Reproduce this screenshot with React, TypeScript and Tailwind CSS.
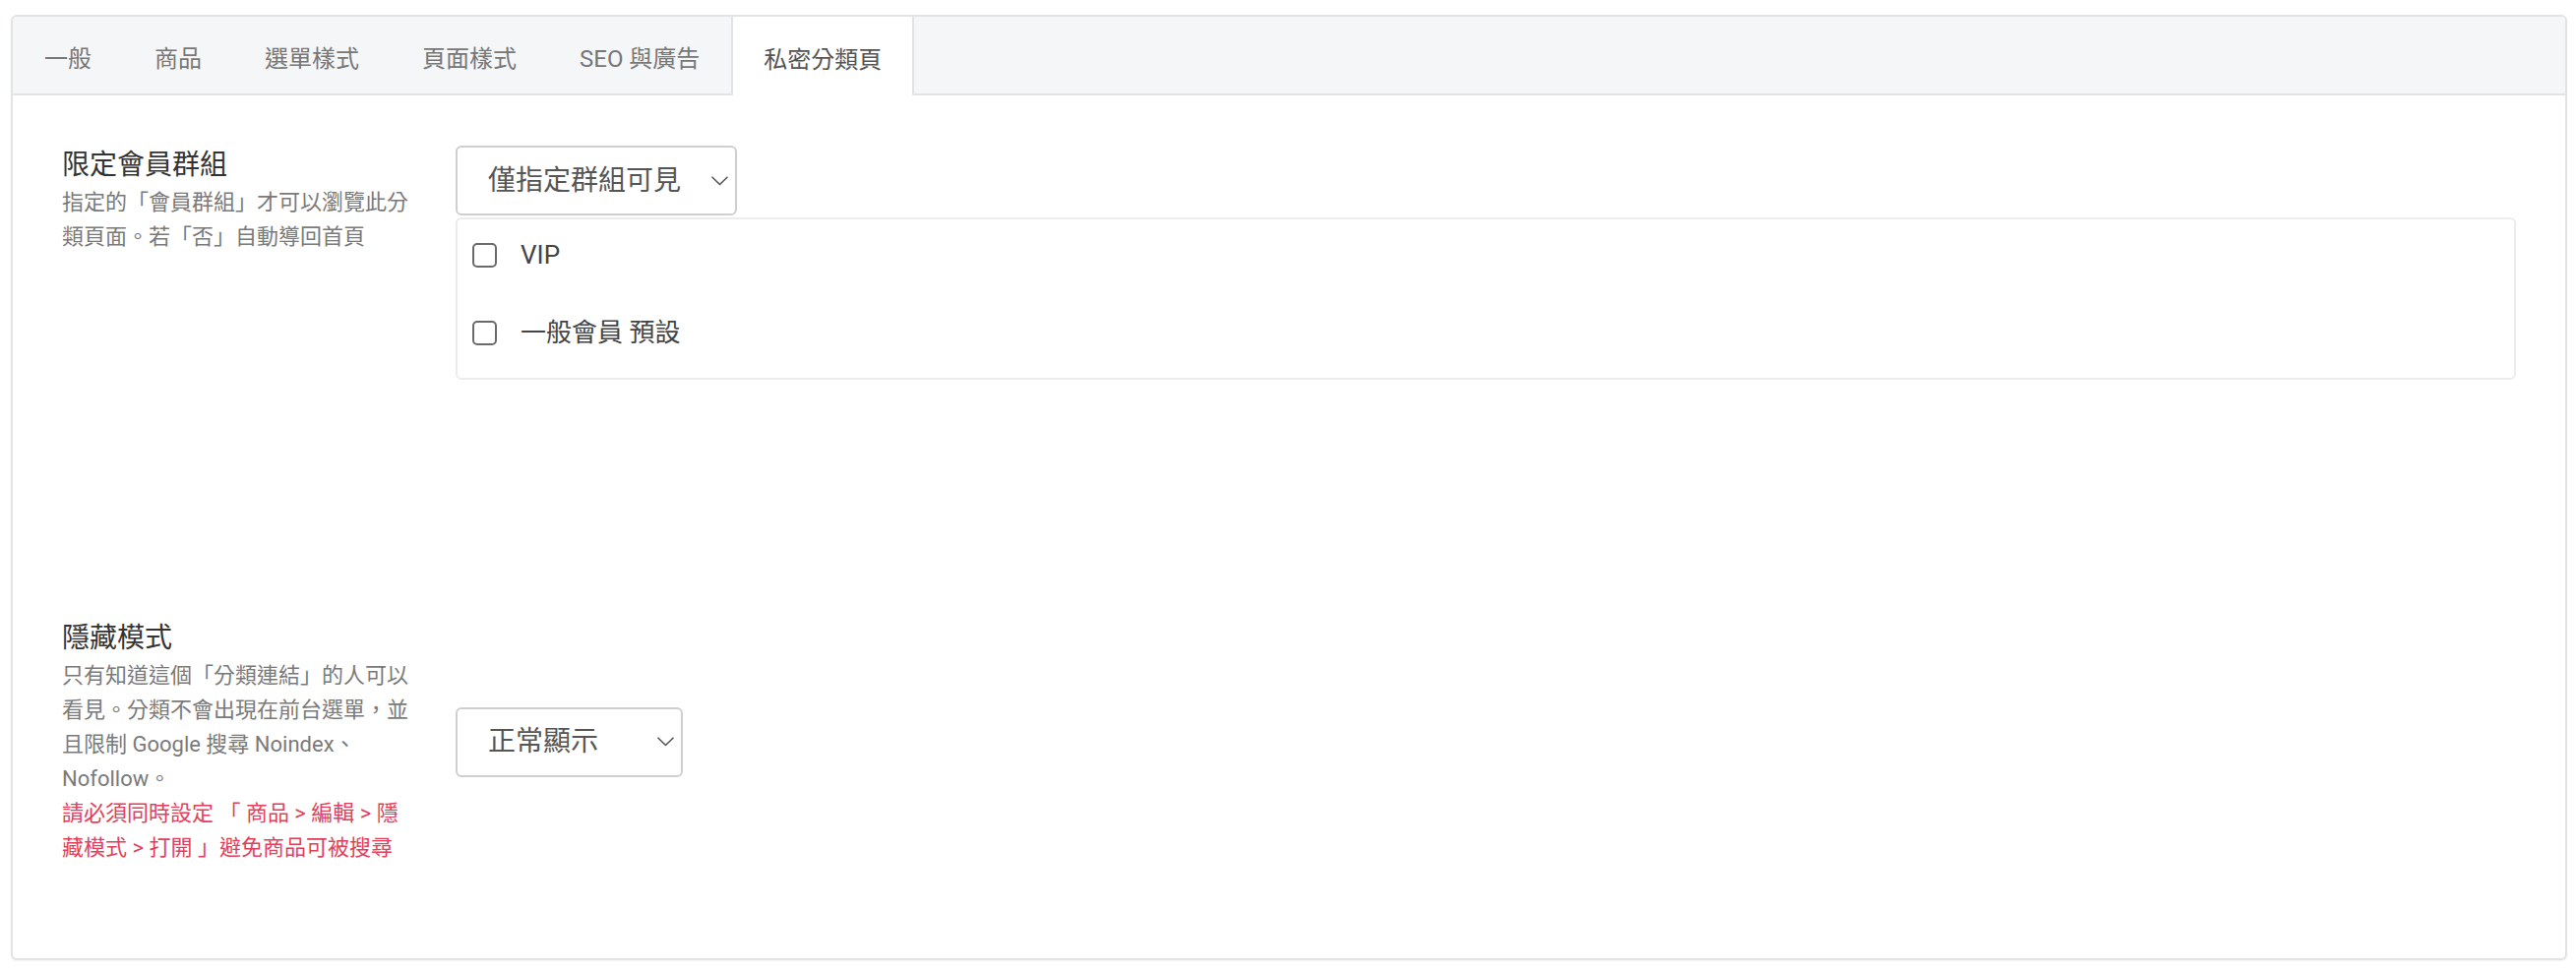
import type { ReactNode } from 'react'

const tabs = ['一般', '商品', '選單樣式', '頁面樣式', 'SEO 與廣告', '私密分類頁']

function Chevron() {
  return (
    <svg width="17" height="10" viewBox="0 0 17 10" fill="none" className="shrink-0">
      <path d="M1 1.2 8.5 8.5 16 1.2" stroke="#555" strokeWidth="1.6" strokeLinecap="round" strokeLinejoin="round" />
    </svg>
  )
}

function FakeSelect({ label, width }: { label: string; width: string }) {
  return (
    <div
      className={`flex h-[71px] items-center justify-between rounded-md border-2 border-[#cfcfcf] bg-white pl-[31px] pr-[7px] text-[28px] text-[#555] ${width}`}
    >
      <span>{label}</span>
      <Chevron />
    </div>
  )
}

function Checkbox({ children }: { children: ReactNode }) {
  return (
    <label className="flex h-[48px] items-center gap-[24px] text-[26px] text-[#444]">
      <span className="block h-[25px] w-[25px] rounded-[5px] border-2 border-[#6a6a6a] bg-white" />
      <span>{children}</span>
    </label>
  )
}

function Field({ title, children }: { title: string; children: ReactNode }) {
  return (
    <div className="w-[400px] shrink-0 pr-[40px]">
      <h3 className="text-[28px] leading-[40px] text-[#333]">{title}</h3>
      <div className="text-[22px] leading-[35px] text-[#7a7a7a]">{children}</div>
    </div>
  )
}

export default function App() {
  return (
    <div
      className="min-h-screen bg-white pl-[11px] pr-[9px] pt-[15px]"
      style={{ fontFamily: 'Roboto, "Noto Sans CJK TC", sans-serif' }}
    >
      <div className="overflow-hidden rounded-md border-2 border-[#e2e3e6] bg-white shadow-[0_1px_2px_rgba(0,0,0,0.06)]">
        <div className="flex h-[80px] border-b-2 border-[#e2e3e6] bg-[#f5f6f8]">
          {tabs.map((t, i) => {
            const active = i === tabs.length - 1
            return (
              <div
                key={t}
                className={
                  active
                    ? 'mb-[-2px] flex items-center border-x-2 border-[#e2e3e6] bg-white px-[31px] pt-[8px] text-[24px] text-[#555]'
                    : 'flex items-center px-[32px] pt-[8px] text-[24px] text-[#777]'
                }
              >
                {t}
              </div>
            )
          })}
        </div>

        <div className="px-[50px] pb-[95px] pt-[51px]">
          <div className="flex">
            <Field title="限定會員群組">
              指定的「會員群組」才可以瀏覽此分
              <br />
              類頁面。若「否」自動導回首頁
            </Field>
            <div className="flex-1">
              <FakeSelect label="僅指定群組可見" width="w-[286px]" />
              <div className="mt-[2px] flex flex-col gap-[31px] rounded-md border-2 border-[#ececec] pb-[22px] pl-[15px] pt-[12px]">
                <Checkbox>VIP</Checkbox>
                <Checkbox>一般會員 預設</Checkbox>
              </div>
            </div>
          </div>

          <div className="mt-[243px] flex items-center">
            <Field title="隱藏模式">
              只有知道這個「分類連結」的人可以
              <br />
              看見。分類不會出現在前台選單，並
              <br />
              且限制 Google 搜尋 Noindex、
              <br />
              Nofollow。
              <br />
              <span className="text-[#e2415d]">
                請必須同時設定 「 商品 &gt; 編輯 &gt; 隱
                <br />
                藏模式 &gt; 打開 」避免商品可被搜尋
              </span>
            </Field>
            <FakeSelect label="正常顯示" width="w-[231px]" />
          </div>
        </div>
      </div>
    </div>
  )
}
